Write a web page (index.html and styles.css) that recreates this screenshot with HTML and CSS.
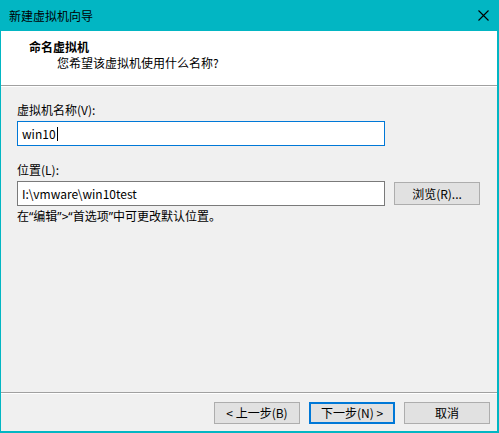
FILE: index.html
```html
<!DOCTYPE html>
<html lang="zh-CN">
<head>
<meta charset="utf-8">
<title>新建虚拟机向导</title>
<link rel="stylesheet" href="styles.css">
</head>
<body>
<div class="window">
  <div class="titlebar">
    <span class="title">新建虚拟机向导</span>
    <svg class="close" width="11" height="11" viewBox="0 0 11 11"><path d="M0.5 0.5 L10.5 10.5 M10.5 0.5 L0.5 10.5" stroke="#000" stroke-width="1.1" fill="none"/></svg>
  </div>
  <div class="frame">
    <div class="header">
      <div class="h-title">命名虚拟机</div>
      <div class="h-sub">您希望该虚拟机使用什么名称?</div>
    </div>
    <div class="content">
      <div class="label first">虚拟机名称(V):</div>
      <div class="row">
        <div class="input focused">win10<span class="caret"></span></div>
      </div>
      <div class="label second">位置(L):</div>
      <div class="row">
        <div class="input">I:\vmware\win10test</div>
        <div class="btn browse">浏览(R)...</div>
      </div>
      <div class="note">在<span class="q">“</span>编辑<span class="q">”</span>&gt;<span class="q">“</span>首选项<span class="q">”</span>中可更改默认位置。</div>
    </div>
    <div class="footer">
      <div class="btn">&lt; 上一步(B)</div>
      <div class="btn primary">下一步(N) &gt;</div>
      <div class="btn">取消</div>
    </div>
  </div>
</div>
</body>
</html>
```
FILE: styles.css
```css
html, body {
  margin: 0;
  padding: 0;
  background: #f0f0f0;
}
body {
  font-family: "Noto Sans CJK SC", "Noto Sans", sans-serif;
  font-size: 12px;
  color: #000;
}
.window {
  width: 499px;
  height: 433px;
  display: flex;
  flex-direction: column;
}
.titlebar {
  height: 31px;
  flex: none;
  background: #02b6c3;
  display: flex;
  align-items: center;
  justify-content: space-between;
  padding: 0 10px 0 9px;
  box-sizing: border-box;
}
.title {
  line-height: 16px;
  margin-top: 1px;
}
.close {
  display: block;
}
.frame {
  flex: 1;
  display: flex;
  flex-direction: column;
  border-left: 1px solid #02b6c3;
  border-right: 2px solid #02b6c3;
  border-bottom: 2px solid #02b6c3;
  background: #f0f0f0;
}
.header {
  background: #fff;
  height: 55px;
  box-sizing: border-box;
  padding: 8px 0 0 28px;
  border-bottom: 1px solid #a0a0a0;
  box-shadow: 0 1px 0 #fff;
}
.h-title {
  font-weight: bold;
  line-height: 16px;
}
.h-sub {
  line-height: 16px;
  padding-left: 28px;
}
.content {
  flex: 1;
  padding: 16px 0 0 16px;
}
.label {
  line-height: 16px;
}
.label.second {
  margin-top: 16px;
}
.row {
  display: flex;
  align-items: center;
  margin-top: 3px;
}
.input {
  width: 368px;
  height: 25px;
  box-sizing: border-box;
  border: 1px solid #7a7a7a;
  background: #fff;
  padding: 0 4px;
  line-height: 23px;
  display: flex;
  align-items: center;
}
.input.focused {
  border-color: #0078d7;
}
.caret {
  display: inline-block;
  width: 1px;
  height: 14px;
  background: #000;
  margin-left: 1px;
}
.btn {
  width: 86px;
  height: 23px;
  box-sizing: border-box;
  border: 1px solid #adadad;
  background: #e1e1e1;
  display: flex;
  align-items: center;
  justify-content: center;
  line-height: 16px;
}
.browse {
  margin-left: 9px;
}
.note {
  line-height: 16px;
  margin-top: 2px;
}
.q {
  font-family: "Noto Sans", sans-serif;
}
.footer {
  height: 39px;
  box-sizing: border-box;
  border-top: 1px solid #a0a0a0;
  box-shadow: inset 0 1px 0 #fff;
  display: flex;
  justify-content: flex-end;
  gap: 9px;
  padding: 9px 7px 0 0;
}
.footer .btn {
  height: 22px;
}
.btn.primary {
  border: 2px solid #0078d7;
}
```
